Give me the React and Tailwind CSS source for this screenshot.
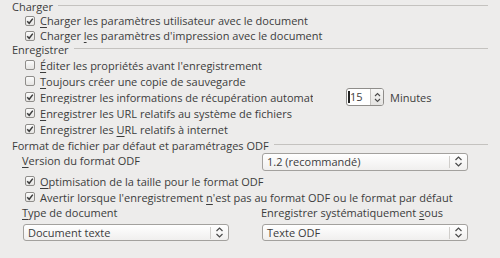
import React from "react";

const font = { fontFamily: '"Open Sans", "DejaVu Sans", sans-serif' };

function U({ children }) {
  return <span className="underline underline-offset-[2px] decoration-[1px]">{children}</span>;
}

function Check({ checked }) {
  return (
    <div className="w-[10px] h-[10px] rounded-[2px] border border-[#8f8d8a] bg-gradient-to-b from-[#fbfbfb] to-[#e6e5e3] flex items-center justify-center shrink-0">
      {checked && (
        <svg width="8" height="8" viewBox="0 0 8 8">
          <path d="M1.2 4.2 L3.2 6.3 L6.8 1.6" fill="none" stroke="#3c3c3c" strokeWidth="1.5" />
        </svg>
      )}
    </div>
  );
}

function Row({ checked, children, h = "h-[16px]" }) {
  return (
    <div className={"flex items-center pl-[25px] " + h}>
      <Check checked={checked} />
      <span className="ml-[5px] whitespace-nowrap">{children}</span>
    </div>
  );
}

function Header({ children, className = "" }) {
  return (
    <div className={"flex items-center h-[13px] pl-[12px] pr-[12px] " + className}>
      <span className="whitespace-nowrap">{children}</span>
      <div className="flex-1 h-px bg-[#c4c2bf] ml-[5px] -mt-[2px]" />
    </div>
  );
}

function Arrows() {
  return (
    <svg width="9" height="13" viewBox="0 0 9 13">
      <path d="M1.5 5 L4.5 2 L7.5 5" fill="none" stroke="#4a4a4a" strokeWidth="1.2" />
      <path d="M1.5 8 L4.5 11 L7.5 8" fill="none" stroke="#4a4a4a" strokeWidth="1.2" />
    </svg>
  );
}

function Select({ children, className = "" }) {
  return (
    <div className={"rounded-[3px] border border-[#a3a19e] bg-gradient-to-b from-white to-[#f0efee] flex items-center pl-[4px] " + className}>
      <span className="flex-1 whitespace-nowrap">{children}</span>
      <div className="w-px h-[12px] bg-[#d0cecb]" />
      <div className="w-[17px] flex items-center justify-center">
        <Arrows />
      </div>
    </div>
  );
}

export default function App() {
  return (
    <div className="w-[500px] h-[258px] bg-[#edeceb] text-[#3c3c3c] text-[11px] leading-[13px] overflow-hidden" style={font}>
      <Header>Charger</Header>
      <Row checked h="h-[15px]"><U>C</U>harger les paramètres utilisateur avec le document</Row>
      <Row checked h="h-[15px]">Charger <U>l</U>es paramètres d'impression avec le document</Row>
      <Header>Enregistrer</Header>
      <div className="h-[1px]" />
      <Row><U>É</U>diter les propriétés avant l'enregistrement</Row>
      <Row><U>T</U>oujours créer une copie de sauvegarde</Row>
      <div className="flex items-center h-[16px]">
        <div className="flex items-center pl-[25px] w-[313px] overflow-hidden shrink-0">
          <Check checked />
          <span className="ml-[5px] whitespace-nowrap">Enregistrer les informations de récupération <U>a</U>utomatique toutes les</span>
        </div>
        <div className="ml-[33px] h-[18px] w-[38px] rounded-[3px] border border-[#8f8d8a] bg-white flex items-center shrink-0">
          <div className="w-[2px] h-[12px] bg-[#222] ml-[1px]" />
          <span className="flex-1 leading-[12px]">15</span>
          <div className="w-[13px] h-[16px] border-l border-[#c4c2bf] bg-gradient-to-b from-[#f7f7f6] to-[#e4e3e1] flex items-center justify-center rounded-r-[2px]">
            <svg width="7" height="11" viewBox="0 0 7 11">
              <path d="M1 4 L3.5 1.5 L6 4" fill="none" stroke="#4a4a4a" strokeWidth="1.1" />
              <path d="M1 7 L3.5 9.5 L6 7" fill="none" stroke="#4a4a4a" strokeWidth="1.1" />
            </svg>
          </div>
        </div>
        <span className="ml-[6px]">Minutes</span>
      </div>
      <Row checked><U>E</U>nregistrer les URL relatifs au système de fichiers</Row>
      <Row checked>Enregistrer les <U>U</U>RL relatifs à internet</Row>
      <div className="h-[2px]" />
      <Header>Format de fichier par défaut et paramétrages ODF</Header>
      <div className="flex items-center h-[19px]">
        <span className="pl-[22px] w-[262px] shrink-0 -mt-[3px]"><U>V</U>ersion du format ODF</span>
        <Select className="w-[206px] h-[18px]">1.2 (recommandé)</Select>
      </div>
      <div className="h-[2px]" />
      <Row checked><U>O</U>ptimisation de la taille pour le format ODF</Row>
      <Row checked>Avertir lorsque l'enregistrement <U>n</U>'est pas au format ODF ou le format par défaut</Row>
      <div className="flex h-[14px] items-center">
        <span className="pl-[22px] w-[261px] shrink-0"><U>T</U>ype de document</span>
        <span>Enregistrer systématiquement <U>s</U>ous</span>
      </div>
      <div className="flex mt-[5px]">
        <div className="pl-[23px] w-[262px] shrink-0">
          <Select className="w-[206px] h-[17px]">Document texte</Select>
        </div>
        <Select className="w-[206px] h-[17px]">Texte ODF</Select>
      </div>
    </div>
  );
}
